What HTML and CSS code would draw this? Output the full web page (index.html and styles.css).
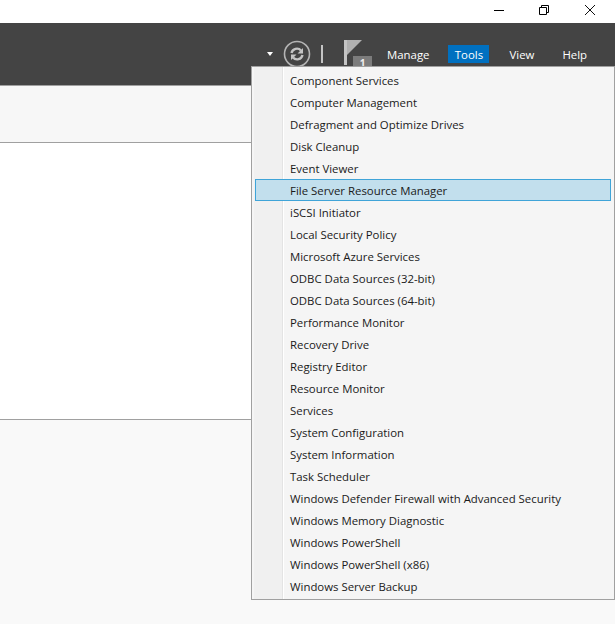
FILE: index.html
```html
<!DOCTYPE html>
<html lang="en">
<head>
<meta charset="utf-8">
<title>Server Manager</title>
<link rel="stylesheet" href="styles.css">
</head>
<body>
<div class="titlebar">
  <svg class="winctl" width="16" height="12" viewBox="0 0 16 12"><path d="M4 6.500H14" stroke="#000" fill="none"/></svg>
  <svg class="winctl" width="16" height="12" viewBox="0 0 16 12"><path d="M3.500 3.500h7v7h-7zM5.500 3.500v-2h7v7h-2" stroke="#000" fill="none"/></svg>
  <svg class="winctl" width="16" height="12" viewBox="0 0 16 12"><path d="M3 1L13 11M13 1L3 11" stroke="#111" fill="none"/></svg>
</div>
<header class="toolbar">
  <span class="caret"></span>
  <svg class="refresh" width="28" height="28" viewBox="0 0 28 28">
    <circle cx="14" cy="14" r="12.500" fill="none" stroke="#b4b4b4" stroke-width="1.600"/>
    <path d="M8.500 13a5.500 5.500 0 0 1 9.500-2.500M19.500 15a5.500 5.500 0 0 1-9.500 2.500" fill="none" stroke="#c4c4c4" stroke-width="2.400"/>
    <path d="M20 8v5.500h-5.500zM8 20v-5.500h5.500z" fill="#c4c4c4"/>
  </svg>
  <span class="divider"></span>
  <div class="flag">
    <svg width="18" height="25" viewBox="0 0 18 25"><path d="M0 0h3v25H0z" fill="#c4c4c4"/><path d="M3 0h15L3 15z" fill="#b0b0b0"/></svg>
    <span class="badge">1</span>
  </div>
  <nav class="menubar">
    <span class="menuitem manage">Manage</span>
    <span class="menuitem tools active">Tools</span>
    <span class="menuitem view">View</span>
    <span class="menuitem help">Help</span>
  </nav>
</header>
<section class="subbar"></section>
<section class="content"></section>
<section class="footer"></section>
<ul class="dropdown">
  <li>Component Services</li>
  <li>Computer Management</li>
  <li>Defragment and Optimize Drives</li>
  <li>Disk Cleanup</li>
  <li>Event Viewer</li>
  <li class="hover">File Server Resource Manager</li>
  <li>iSCSI Initiator</li>
  <li>Local Security Policy</li>
  <li>Microsoft Azure Services</li>
  <li>ODBC Data Sources (32-bit)</li>
  <li>ODBC Data Sources (64-bit)</li>
  <li>Performance Monitor</li>
  <li>Recovery Drive</li>
  <li>Registry Editor</li>
  <li>Resource Monitor</li>
  <li>Services</li>
  <li>System Configuration</li>
  <li>System Information</li>
  <li>Task Scheduler</li>
  <li>Windows Defender Firewall with Advanced Security</li>
  <li>Windows Memory Diagnostic</li>
  <li>Windows PowerShell</li>
  <li>Windows PowerShell (x86)</li>
  <li>Windows Server Backup</li>
</ul>
</body>
</html>
```
FILE: styles.css
```css
* { box-sizing: border-box; }
html, body { margin: 0; padding: 0; height: 100%; overflow: hidden; }
body {
  font-family: "Open Sans", "Liberation Sans", sans-serif;
  font-size: 11.4px;
  background: #f9f9f9;
  display: flex;
  flex-direction: column;
  position: relative;
}
.titlebar {
  height: 23px;
  background: #fff;
  display: flex;
  justify-content: flex-end;
  align-items: flex-start;
  padding: 4px 17px 0 0;
  gap: 30px;
}
.winctl { display: block; }
.toolbar {
  height: 63px;
  background: #444;
  border-bottom: 1px solid #a0a0a0;
  display: flex;
  align-items: flex-start;
  padding: 17px 0 0 267px;
  color: #fff;
}
.caret {
  width: 0; height: 0;
  margin-top: 12px;
  border-left: 3.5px solid transparent;
  border-right: 3.5px solid transparent;
  border-top: 4px solid #fff;
}
.refresh { margin-left: 10px; }
.divider {
  width: 2px; height: 18px;
  background: #c4c4c4;
  margin: 5px 0 0 10px;
}
.flag { position: relative; width: 30px; height: 28px; margin-left: 21px; }
.flag svg { display: block; }
.badge {
  position: absolute;
  left: 9px; top: 16px;
  width: 19px; height: 14px;
  background: #7c7c7c;
  color: #eee;
  font-size: 10px;
  font-weight: 700;
  line-height: 14px;
  text-align: center;
}
.menubar { display: flex; margin-left: 13px; }
.menuitem {
  height: 18px;
  line-height: 20px;
  margin-top: 5px;
  color: #fff;
  white-space: nowrap;
}
.menuitem.manage { margin-right: 19px; }
.menuitem.tools { width: 41px; text-align: center; margin-right: 20px; }
.menuitem.view { margin-right: 28px; }
.menuitem.active { background: #0070c0; }
.subbar { height: 57px; background: #f7f7f7; border-bottom: 1px solid #a0a0a0; }
.content { height: 277px; background: #fff; border-bottom: 1px solid #a0a0a0; }
.footer { flex: 1; background: #f9f9f9; }
.dropdown {
  position: absolute;
  left: 251px; top: 66px;
  width: 364px; height: 534px;
  margin: 0;
  padding: 2px 3px 0 3px;
  list-style: none;
  border: 1px solid #a0a0a0;
  background: linear-gradient(to right, #f5f5f5 0, #f5f5f5 2px, #f0f0f0 2px, #f0f0f0 30px, #e4e4e4 30px, #e4e4e4 31px, #fff 31px, #fff 32px, #f5f5f5 32px);
  color: #1a1a1a;
}
.dropdown li {
  height: 22px;
  line-height: 22px;
  padding-left: 34px;
  white-space: nowrap;
  border: 1px solid transparent;
}
.dropdown li.hover {
  background: #c2dfed;
  border-color: #3fa4d8;
}
```
